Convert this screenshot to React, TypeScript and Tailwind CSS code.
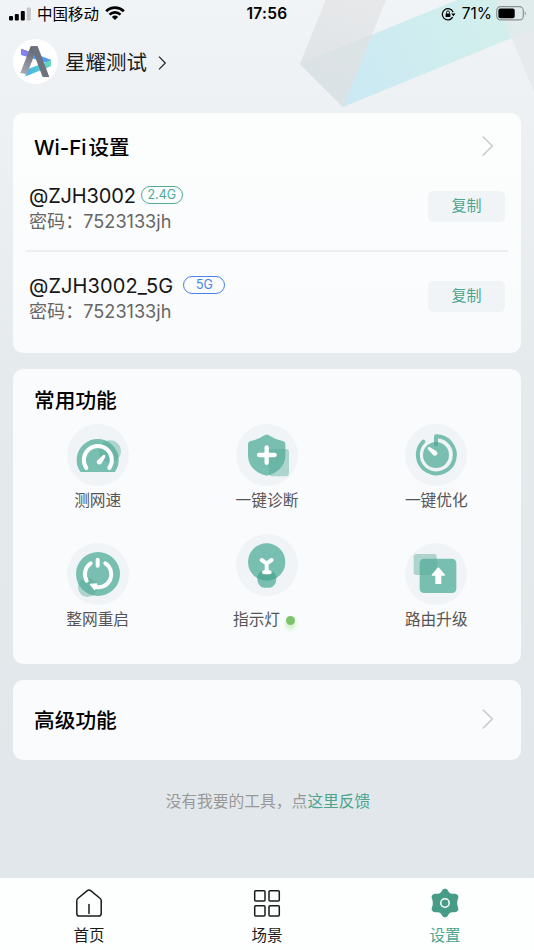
import type { ReactNode } from 'react';

const wifiList = [
  { ssid: '@ZJH3002', band: '2.4G', password: '7523133jh', name: 'tracking-[-0.15px]', badge: 'ml-[5px] border-[#4fab94] text-[#4fab94]' },
  { ssid: '@ZJH3002_5G', band: '5G', password: '7523133jh', name: 'tracking-[0.1px]', badge: 'ml-[10px] border-[#4a83ea] text-[#4a83ea]' },
];

const ToolIcon = ({ children }: { children: ReactNode }) => (
  <svg viewBox="0 0 186 186" className="block size-[62px] rounded-full bg-[#f1f4f7]" fill="none">
    {children}
  </svg>
);

const SpeedIcon = () => (
  <ToolIcon>
    <path d="M42 141A60 60 0 1 1 142 141Z" fill="#78beb1" stroke="#78beb1" strokeWidth="6" strokeLinejoin="round" />
    <circle cx="129" cy="82" r="33" fill="#55aa98" fillOpacity="0.43" />
    <path d="M58 132A42 42 0 1 1 127 132" stroke="#fff" strokeWidth="12" strokeLinecap="round" />
    <path d="M90 110L109 93Q117 91 115 99L103 119C96 125 86 118 90 110Z" fill="#fff" />
  </ToolIcon>
);

const DiagnoseIcon = () => (
  <ToolIcon>
    <path
      d="M87 33Q92 30 97 33Q118 47 142 52Q148 54 148 60V94C148 127 123 147 97 154Q92 156 87 154C61 147 36 127 36 94V60Q36 54 42 52Q66 47 87 33Z"
      fill="#78beb1"
    />
    <rect x="99" y="75" width="60" height="82" rx="9" fill="#55aa98" fillOpacity="0.43" />
    <path d="M92 70V116M69 93H116" stroke="#fff" strokeWidth="13" strokeLinecap="round" />
  </ToolIcon>
);

const OptimizeIcon = () => (
  <ToolIcon>
    <circle cx="93" cy="93" r="39" fill="#78beb1" />
    <path d="M55 53A55.5 55.5 0 1 0 93 37V61" stroke="#78beb1" strokeWidth="12" strokeLinecap="round" strokeLinejoin="round" />
    <path d="M87 55.500Q93 53 99 55.500V61A6 6 0 0 1 87 61Z" fill="#5aab9a" />
    <path d="M68 75Q66 68 74 69L94 82C102 88 94 99 85 94Z" fill="#fff" />
  </ToolIcon>
);

const RestartIcon = () => (
  <ToolIcon>
    <circle cx="93" cy="93" r="66" fill="#78beb1" />
    <circle cx="62" cy="133" r="29" fill="#55aa98" fillOpacity="0.43" />
    <path d="M71 61A39 39 0 0 0 59 113" stroke="#fff" strokeWidth="12" strokeLinecap="round" />
    <path d="M115 61A39 39 0 0 1 86 132" stroke="#fff" strokeWidth="12" strokeLinecap="round" />
    <path d="M92 50V68" stroke="#fff" strokeWidth="12" strokeLinecap="round" />
    <path d="M70 124L89 123L83 140Z" fill="#fff" stroke="#fff" strokeWidth="4" strokeLinejoin="round" />
  </ToolIcon>
);

const LightIcon = () => (
  <ToolIcon>
    <defs>
      <clipPath id="bulb">
        <circle cx="92" cy="84" r="56" />
      </clipPath>
    </defs>
    <circle cx="92" cy="84" r="56" fill="#78beb1" />
    <path d="M64 133C64 117 76 109 92 109S121 117 121 133C121 150 112 161 100 161H84C73 161 64 150 64 133Z" fill="#78beb1" />
    <path d="M64 133C64 117 76 109 92 109S121 117 121 133V150H64Z" fill="#55aa98" clipPath="url(#bulb)" />
    <path d="M77 78L87 85Q92 89 97 85L107 78M92 87V114M84 115H101" stroke="#fff" strokeWidth="12" strokeLinecap="round" strokeLinejoin="round" />
  </ToolIcon>
);

const UpgradeIcon = () => (
  <ToolIcon>
    <rect x="44" y="47" width="110" height="103" rx="13" fill="#78beb1" />
    <rect x="26" y="33" width="69" height="63" rx="8" fill="#55aa98" fillOpacity="0.43" />
    <path d="M100 75L118 96H107V121H93V96H82Z" fill="#fff" stroke="#fff" strokeWidth="4" strokeLinejoin="round" />
  </ToolIcon>
);

const tools = [
  { label: '测网速', icon: <SpeedIcon /> },
  { label: '一键诊断', icon: <DiagnoseIcon /> },
  { label: '一键优化', icon: <OptimizeIcon /> },
  { label: '整网重启', icon: <RestartIcon /> },
  { label: '指示灯', icon: <LightIcon />, online: true },
  { label: '路由升级', icon: <UpgradeIcon /> },
];

const HomeIcon = () => (
  <svg width="28" height="30" viewBox="0 0 28 30" fill="none" stroke="#1b1b1b" strokeWidth="1.500">
    <path d="M12.300 2.700Q14 1.400 15.700 2.700L25.200 10.500Q26.200 11.400 26.200 12.700V25.500Q26.200 28.100 23.600 28.100H4.400Q1.800 28.100 1.800 25.500V12.700Q1.800 11.400 2.800 10.500Z" />
    <path d="M14 16.500V25.500" strokeLinecap="round" />
  </svg>
);

const SceneIcon = () => (
  <svg width="28" height="30" viewBox="0 0 28 30" fill="none" stroke="#1b1b1b" strokeWidth="1.500">
    <rect x="1.700" y="2.700" width="10.300" height="10.300" rx="1" />
    <rect x="16" y="2.700" width="10.300" height="10.300" rx="1" />
    <rect x="1.700" y="17.800" width="10.300" height="10.300" rx="1" />
    <rect x="16" y="17.800" width="10.300" height="10.300" rx="1" />
  </svg>
);

const GearIcon = () => (
  <svg width="28" height="30" viewBox="0 0 28 30" fill="none">
    <path
      d="M11.400 2C12.600 0.200 15.400 0.200 16.600 2L17.800 4Q19 5.900 21.200 5.800L23.600 5.700C26.400 5.700 28.100 8 27.100 10.300L26.500 12.200Q25.900 15 26.500 17.800L27.100 19.700C28.100 22 26.400 24.300 23.600 24.300L21.200 24.200Q19 24.100 17.800 26L16.600 28C15.400 29.800 12.600 29.800 11.400 28L10.200 26Q9 24.100 6.800 24.200L4.400 24.300C1.600 24.300 -0.100 22 0.900 19.700L1.500 17.800Q2.100 15 1.500 12.200L0.900 10.300C-0.100 8 1.600 5.700 4.400 5.700L6.800 5.800Q9 5.900 10.200 4Z"
      fill="#479c88"
    />
    <circle cx="14" cy="15" r="4.200" stroke="#fff" strokeWidth="1.500" />
  </svg>
);

const tabs = [
  { label: '首页', icon: <HomeIcon />, color: 'text-[#1b1b1b]' },
  { label: '场景', icon: <SceneIcon />, color: 'text-[#1b1b1b]' },
  { label: '设置', icon: <GearIcon />, color: 'text-[#4ba48e]' },
];

const Chevron = () => (
  <svg className="-mt-[2px]" width="12" height="20" viewBox="0 0 12 20" fill="none" stroke="#c9caca" strokeWidth="1.600" strokeLinecap="round" strokeLinejoin="round">
    <path d="M1.200 1L10.400 10L1.200 19" />
  </svg>
);

const StatusBar = () => (
  <div className="relative flex h-7 items-center pl-[9px] pr-[7px] text-black">
    <svg className="-mt-px" width="22" height="14" viewBox="0 0 22 14">
      <rect x="0" y="9" width="4" height="4.500" rx="1" />
      <rect x="5.800" y="7" width="4" height="6.500" rx="1" />
      <rect x="11.800" y="4" width="4" height="9.500" rx="1" />
      <rect x="17.800" y="0.500" width="4" height="13" rx="1" fill="#c3c5c8" />
    </svg>
    <span className="ml-[6px] pt-[2px] text-[15.500px] leading-7">中国移动</span>
    <svg className="-mt-[2px] ml-[6px]" width="20" height="14" viewBox="0 0 20 14" fill="none" stroke="#000">
      <path d="M1.200 5.200A12.800 12.800 0 0 1 18.800 5.200" strokeWidth="2.800" />
      <path d="M4.500 8.600A8 8 0 0 1 15.500 8.600" strokeWidth="2.600" />
      <path d="M10 14L6.900 10.900A4.400 4.400 0 0 1 13.100 10.900Z" fill="#000" stroke="none" />
    </svg>
    <span className="absolute inset-x-0 top-0 text-center text-[15.500px] font-semibold leading-7 tracking-[0.3px]">17:56</span>
    <svg className="ml-auto" width="15" height="14" viewBox="0 0 15 14" fill="none" stroke="#000" strokeWidth="1.300">
      <path d="M11.700 10.200A5.600 5.600 0 1 1 12.100 5.200" />
      <path d="M10.200 6.600H14.600L12.400 9.300Z" fill="#000" stroke="none" />
      <rect x="4.600" y="6.400" width="4.800" height="3.600" rx="0.500" fill="#000" stroke="none" />
      <path d="M5.600 6.600V5.300A1.400 1.400 0 0 1 8.400 5.300V6.600" strokeWidth="0.900" />
    </svg>
    <span className="ml-[6px] text-[15.500px] leading-7">71%</span>
    <svg className="-mt-px ml-[4px]" width="31" height="15" viewBox="0 0 31 15" fill="none">
      <rect x="0.700" y="0.700" width="26.600" height="13.200" rx="3.800" stroke="#8d9294" strokeWidth="1.200" />
      <rect x="2.400" y="2.400" width="16.300" height="9.800" rx="2" fill="#000" />
      <path d="M28.800 5Q30.800 7.300 28.800 9.600Z" fill="#8d9294" />
    </svg>
  </div>
);

// Faded brand ribbons behind the header
const HeaderArt = () => (
  <svg className="absolute right-0 top-0" width="240" height="110" viewBox="294 0 240 110">
    <defs>
      <linearGradient id="ribbon" x1="343" y1="100" x2="510" y2="20" gradientUnits="userSpaceOnUse">
        <stop stopColor="#cbe9f4" />
        <stop offset="1" stopColor="#d3efec" />
      </linearGradient>
      <linearGradient id="band" x1="350" y1="0" x2="320" y2="90" gradientUnits="userSpaceOnUse">
        <stop stopColor="#e6e8ea" />
        <stop offset="1" stopColor="#dfe3e5" />
      </linearGradient>
    </defs>
    <path d="M300 64L457 0H534V29L343 107Z" fill="url(#ribbon)" />
    <path d="M325.500 0H386L343 107L300 64Z" fill="url(#band)" />
    <path d="M300 64L368 36L372 35L343 107Z" fill="#d9e2e4" fillOpacity="0.75" />
    <path d="M496 0H534V92Z" fill="#e7eaec" />
    <path d="M496 0H534V29L512 38Z" fill="#e0ebeb" />
  </svg>
);

const Logo = () => (
  <svg className="size-[45px] rounded-full bg-white" viewBox="0 0 135 135" fill="none">
    <defs>
      <linearGradient id="logoRibbon" x1="38" y1="105" x2="114" y2="65" gradientUnits="userSpaceOnUse">
        <stop stopColor="#48b3ee" />
        <stop offset="1" stopColor="#67ddb8" />
      </linearGradient>
      <linearGradient id="logoLeg" x1="65" y1="25" x2="30" y2="115" gradientUnits="userSpaceOnUse">
        <stop stopColor="#5d6270" />
        <stop offset="1" stopColor="#b0b3ba" />
      </linearGradient>
    </defs>
    <path d="M24 29L114 62V76L24 47Z" fill="#4f9cf2" />
    <path d="M24 29L46 37V54L24 47Z" fill="#8582ef" />
    <path d="M38 93L114 63V82L38 112Z" fill="url(#logoRibbon)" />
    <path d="M53 22H74L42 106L22 102Z" fill="url(#logoLeg)" />
    <path d="M54 22H74L109 114H89Z" fill="#6e727e" />
  </svg>
);

const App = () => {
  return (
    <div className="relative flex h-[950px] w-[534px] flex-col overflow-hidden bg-linear-to-b from-[#f1f4f7] via-[#e5eaed] via-40% to-[#e1e6ea] font-[Inter,'Noto_Sans_CJK_SC',sans-serif]">
      <HeaderArt />
      <StatusBar />

      <header className="relative flex h-[84.500px] items-start pl-[13px] pt-[11px]">
        <Logo />
        <div className="flex h-[45px] items-center">
          <span className="ml-[7px] pt-[3px] text-[20.500px] leading-none text-[#1b1b1b]">星耀测试</span>
          <svg className="ml-[11px] mt-[2px]" width="9" height="14" viewBox="0 0 9 14" fill="none" stroke="#222" strokeWidth="1.200">
            <path d="M1 0.700L7.300 7L1 13.300" />
          </svg>
        </div>
      </header>

      <main className="relative flex flex-1 flex-col gap-[15.500px] px-[13px]">
        <section className="h-[240.500px] rounded-[10px] bg-linear-to-b from-[#fcfdfd] to-[#fafbfc]">
          <div className="flex h-[69px] items-center justify-between pl-[21px] pr-[27px]">
            <h2 className="pt-[2px] text-[20.500px] font-medium text-black">
              Wi-Fi<span className="ml-[2px]">设置</span>
            </h2>
            <Chevron />
          </div>
          {wifiList.map((wifi, index) => (
            <div
              key={wifi.ssid}
              className={`mx-[13px] flex justify-between pl-[3px] pr-[3px] ${index > 0 ? 'mt-[15px] border-t-2 border-[#eceeef] pt-[20px]' : ''}`}
            >
              <div>
                <div className="flex h-[27px] items-center">
                  <span className={`pt-px text-[20px] text-[#161616] ${wifi.name}`}>{wifi.ssid}</span>
                  <span className={`flex h-[18px] w-[42px] items-center justify-center rounded-full border pt-px text-[12.500px] ${wifi.badge}`}>
                    {wifi.band}
                  </span>
                </div>
                <p className="h-[26px] text-[18.100px] leading-[25px] text-[#666]">密码：{wifi.password}</p>
              </div>
              <button className="mt-[9px] h-[31px] w-[77px] rounded-[5px] bg-[#f1f4f7] pt-px text-[15px] text-[#4ba48e]">复制</button>
            </div>
          ))}
        </section>

        <section className="h-[295.500px] rounded-[10px] bg-[#fafbfd]">
          <h2 className="pl-[21px] pt-[17px] text-[20.700px] font-medium leading-[30px] text-black">常用功能</h2>
          <div className="mt-[8px] grid grid-cols-3">
            {tools.map((tool) => (
              <div key={tool.label} className={`flex h-[119px] flex-col items-center ${tool.online ? '-mt-[9px]' : ''}`}>
                {tool.icon}
                <div className={`flex items-center leading-6 ${tool.online ? 'mr-[6px] mt-[12px]' : 'mt-[3px]'}`}>
                  <span className="text-[15.700px] text-[#555]">{tool.label}</span>
                  {tool.online && <span className="ml-[6px] mt-px size-[9px] rounded-full bg-[#7cc36f] shadow-[0_4px_5px_#c5eebd]" />}
                </div>
              </div>
            ))}
          </div>
        </section>

        <section className="flex h-[80px] items-center justify-between rounded-[10px] bg-[#fafbfd] pl-[21px] pr-[27px]">
          <h2 className="pt-[2px] text-[20.700px] font-medium text-black">高级功能</h2>
          <Chevron />
        </section>

        <p className="mt-[15px] pl-[2px] text-center text-[15.750px] leading-6 text-[#999]">
          没有我要的工具，点<a className="text-[#4ba48e]">这里反馈</a>
        </p>
      </main>

      <nav className="relative grid h-[72px] grid-cols-3 bg-[#fdfefe]">
        {tabs.map((tab) => (
          <a key={tab.label} className={`flex flex-col items-center pt-[10px] ${tab.color}`}>
            {tab.icon}
            <span className="mt-[7px] text-[15.500px] leading-[22px]">{tab.label}</span>
          </a>
        ))}
      </nav>
    </div>
  );
};

export default App;
